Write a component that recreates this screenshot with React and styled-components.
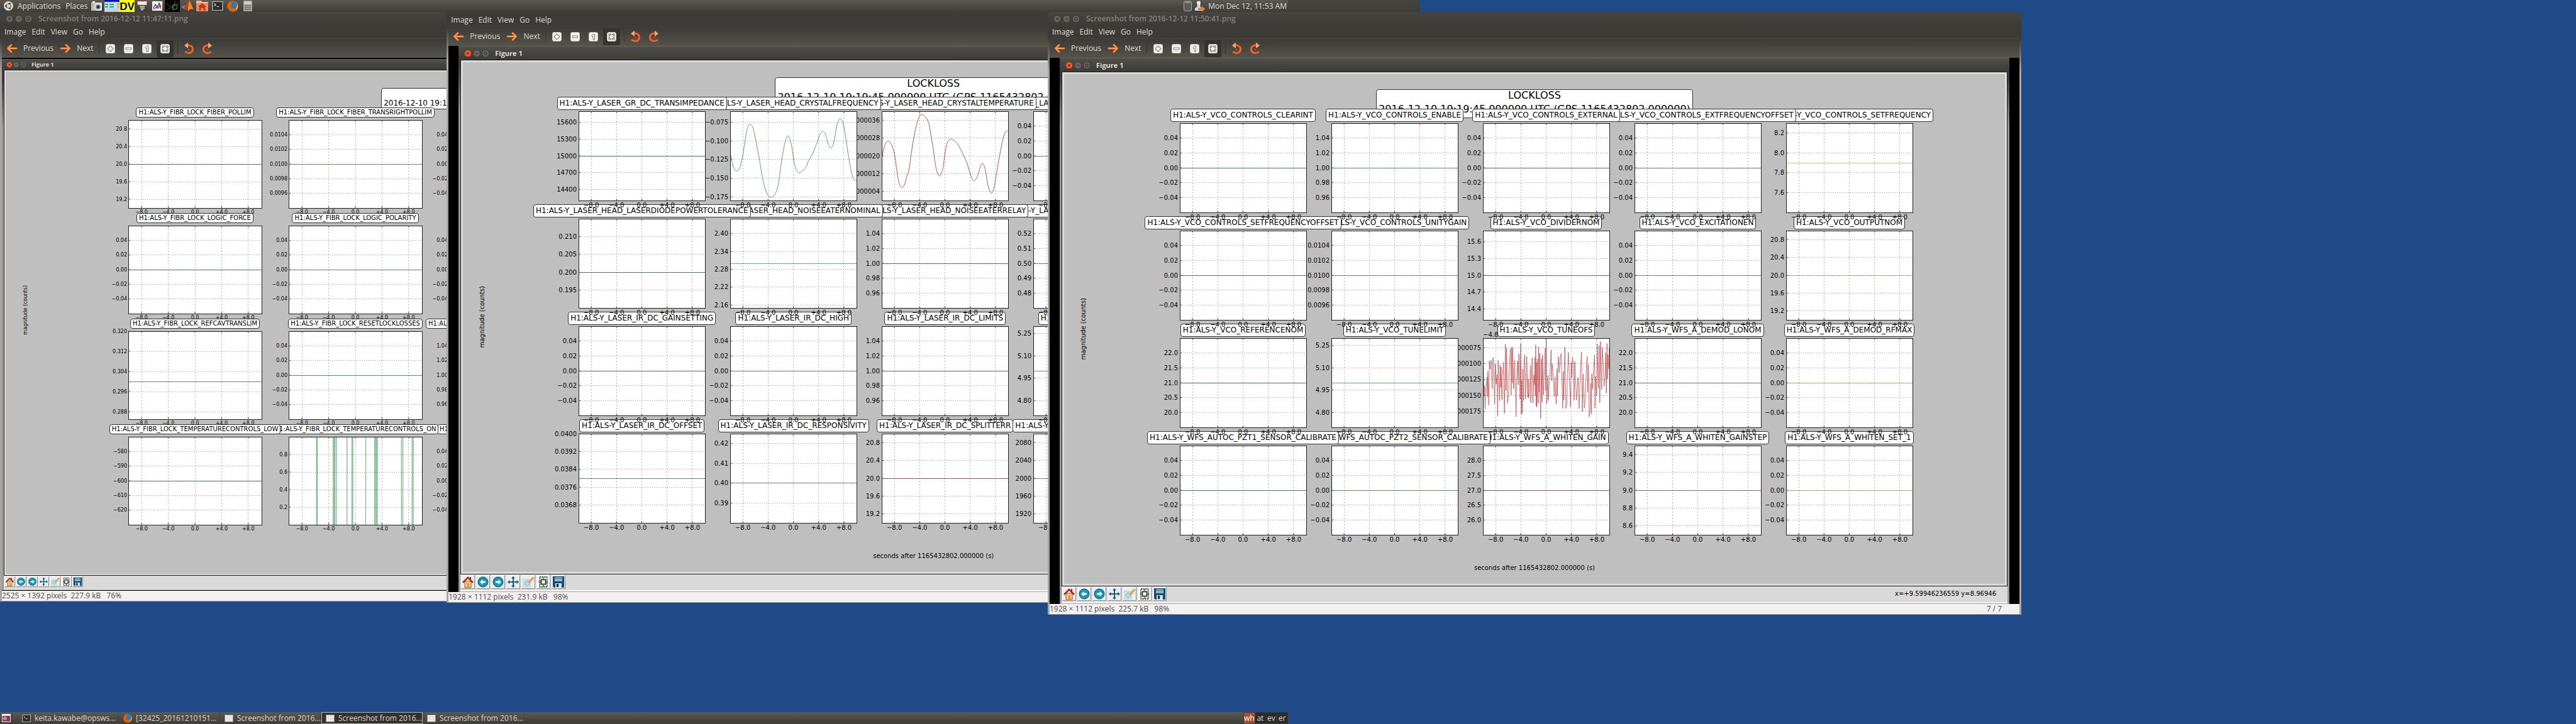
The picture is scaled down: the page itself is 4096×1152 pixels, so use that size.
import React from "react";
import styled, { createGlobalStyle } from "styled-components";

const UI = `"Open Sans", "Noto Sans", sans-serif`;
const PLOT = `"DejaVu Sans", sans-serif`;

const C = {
  blue: "#4c72b0",
  green: "#55a868",
  red: "#c44e52",
  purple: "#8172b2",
  tan: "#ccb974",
};

const Global = createGlobalStyle`
  * { box-sizing: border-box; }
  body { margin: 0; background: #204a87; font: 12px/16px ${UI}; }
  button { font: inherit; color: inherit; background: none; border: 0; margin: 0; padding: 0; cursor: pointer; }
`;

/* ------------------------------------------------------------ desktop */

const Desktop = styled.main`
  position: relative;
  min-height: 100vh;
  display: flex;
  flex-direction: column;
  justify-content: space-between;
  overflow: hidden;
  background: #204a87;
`;

const Panel = styled.header`
  position: relative;
  z-index: 5;
  width: 50%;
  height: 19px;
  display: flex;
  align-items: center;
  color: #dfdbd2;
  background: linear-gradient(#5b5850, #3e3d39);
`;

const Spacer = styled.div`
  flex: 1;
`;

const PanelMenu = styled.button`
  display: flex;
  align-items: center;
  gap: 7px;
  padding-left: ${(p) => p.$pad}px;
  line-height: 19px;
  white-space: nowrap;
`;

const Launchers = styled.nav`
  display: flex;
  margin-left: 3px;
`;

const Launcher = styled.button`
  width: 24px;
  height: 19px;
  display: flex;
  align-items: center;
  justify-content: center;
`;

const Tray = styled.div`
  display: flex;
  align-items: center;
  gap: 4px;
  padding-right: 2px;
  white-space: nowrap;
`;

const TaskIcon = styled.button`
  width: 20px;
  height: 19px;
  padding-left: 3px;
  display: flex;
  align-items: center;
  border-right: 1px solid #45443e;
  margin-right: 8px;
`;

const Task = styled.button`
  width: 161px;
  height: 19px;
  display: flex;
  align-items: center;
  gap: 6px;
  padding-left: 6px;
  white-space: nowrap;
  border: 1px solid ${(p) => (p.$active ? "#b4b1a9" : "transparent")};
  border-right-color: ${(p) => (p.$active ? "#b4b1a9" : "#45443e")};
  background: ${(p) => (p.$active ? "#33322f" : "none")};
`;

const Workspaces = styled.div`
  display: flex;
  height: 19px;
  width: 71px;
  border: 1px solid #3c3b37;
  background: #3c3b37;
  gap: 1px;
`;

const Workspace = styled.button`
  flex: 1;
  line-height: 17px;
  color: ${(p) => (p.$active ? "#fff" : "#dfdbd2")};
  background: ${(p) => (p.$active ? "#a5512d" : "#2b2b29")};
`;

/* ------------------------------------------------------------ viewer window */

const Window = styled.section`
  position: absolute;
  left: ${(p) => p.$left};
  top: ${(p) => p.$top}px;
  width: ${(p) => p.$width};
  z-index: ${(p) => p.$z};
  padding: 0 3px 1px;
  border-radius: 6px 6px 0 0;
  background: linear-gradient(#42413c 0, #3c3b37 42px, #a8a6a2 96px);
`;

const TitleBar = styled.div`
  height: 22px;
  display: flex;
  align-items: center;
  padding-left: 6px;
  color: #85827b;
  font-weight: 600;
  gap: 3px;
  white-space: nowrap;
`;

const TitleText = styled.span`
  padding-left: 7px;
`;

const Chrome = styled.div`
  margin: 0 -3px;
  padding: 0 3px;
  border-radius: 6px 6px 0 0;
  background: linear-gradient(#46453f, #3c3b37 22px);
`;

const MenuBar = styled.nav`
  height: 20px;
  display: flex;
  align-items: center;
  gap: 9px;
  padding-left: 4px;
  color: #dfdbd2;
`;

const ToolBar = styled.div`
  height: 31px;
  display: flex;
  align-items: center;
  color: #dfdbd2;
  background: linear-gradient(#3c3b37, #56534b);
  border-top: 1px solid #45443f;
`;

const NavButton = styled.button`
  display: flex;
  align-items: center;
  gap: 9px;
  margin-left: ${(p) => p.$gap}px;
`;

const Divider = styled.i`
  width: 1px;
  height: 18px;
  margin: 0 ${(p) => p.$right}px 0 ${(p) => p.$left}px;
  background: #35342f;
`;

const ToolButton = styled.button`
  width: 27px;
  height: 27px;
  margin-right: 2px;
  display: flex;
  align-items: center;
  justify-content: center;
  border-radius: 3px;
  background: ${(p) => (p.$pressed ? "#353430" : "none")};
`;

const ImageArea = styled.div`
  padding: ${(p) => (p.$small ? "2px 0 1px" : "0 16px")};
  background: #000;
`;

const Status = styled.footer`
  height: 16px;
  display: flex;
  justify-content: space-between;
  padding-right: 28px;
  line-height: 16px;
  color: #4c4c4c;
  background: #f2f1f0;
  white-space: pre;
`;

/* ------------------------------------------------------------ figure window */

const Figure = styled.div`
  background: linear-gradient(#3c3b37 0, #3c3b37 30px, #9a9894 110px);
  padding: 0 3px;
  border-bottom: 1px solid #a8a6a2;
`;

const FigureTitle = styled.div`
  height: ${(p) => (p.$small ? 17 : 22)}px;
  margin: 0 -3px;
  padding-left: ${(p) => (p.$small ? 7 : 9)}px;
  display: flex;
  align-items: center;
  gap: ${(p) => (p.$small ? 1 : 2)}px;
  color: #dfdbd2;
  font-weight: 700;
  font-size: ${(p) => (p.$small ? 9 : 11)}px;
  background: linear-gradient(#4f4e47, #3c3b37);
  border-top: 1px solid #65635b;
`;

const FigureName = styled.span`
  padding-left: 7px;
`;

const CanvasFrame = styled.div`
  display: flow-root;
  border: 1px solid #1c1c1c;
  background: #dcdcdc;
`;

const Canvas = styled.div`
  display: grid;
  grid-template-columns: ${(p) => p.$cols};
  margin: ${(p) => (p.$small ? 2 : 3)}px;
  padding: ${(p) => (p.$small ? "26px 0 78px" : "24px 0 19px")};
  background: #bfbfbf;
`;

const SupTitle = styled.div`
  grid-column: 1 / -1;
  justify-self: center;
  height: ${(p) => (p.$small ? 34 : 46)}px;
  margin-bottom: ${(p) => (p.$small ? -3 : -15)}px;
  padding: 0 3px ${(p) => (p.$small ? 1 : 2)}px;
  display: flex;
  flex-direction: column;
  justify-content: flex-end;
  text-align: center;
  font: ${(p) => (p.$small ? "12px/16px" : "16px/22px")} ${PLOT};
  color: #000;
  background: #fff;
  border: 1px solid #333;
  border-radius: 4px;
  white-space: nowrap;
`;

const YLabel = styled.div`
  align-self: center;
  padding-top: ${(p) => (p.$small ? 20 : 0)}px;
  margin: ${(p) => (p.$small ? "0 0 0 26px" : "23px 0 0 25px")};
  writing-mode: vertical-rl;
  rotate: 180deg;
  width: 12px;
  font: ${(p) => (p.$small ? 8 : 10)}px/12px ${PLOT};
  white-space: nowrap;
`;

const XLabel = styled.div`
  grid-column: 1 / -1;
  margin-top: 47px;
  text-align: center;
  font: 10px/12px ${PLOT};
`;

const Plots = styled.div`
  display: grid;
  grid-template-columns: repeat(5, minmax(0, 1fr));
  gap: ${(p) => (p.$small ? "8px 43px" : "6px 40px")};
`;

const Subplot = styled.div`
  position: relative;
  grid-column: ${(p) => p.$col};
  grid-row: ${(p) => p.$row};
  z-index: ${(p) => p.$z};
  display: flex;
  flex-direction: column;
  gap: ${(p) => (p.$small ? 4 : 2)}px;
`;

const PlotTitle = styled.div`
  align-self: center;
  position: relative;
  z-index: 1;
  flex: none;
  height: ${(p) => (p.$small ? 16 : 21)}px;
  min-width: ${(p) => p.$width || 0}px;
  padding: 0 3px;
  font: ${(p) => (p.$small ? "10px/13px" : "12px/18px")} ${PLOT};
  color: #000;
  background: #fff;
  border: 1px solid #333;
  border-radius: 4px;
  white-space: nowrap;
  visibility: ${(p) => (p.$empty ? "hidden" : "visible")};
`;

const Axes = styled.svg`
  display: block;
  width: 100%;
  height: ${(p) => (p.$small ? 140 : 142)}px;
  overflow: visible;
  font: ${(p) => (p.$small ? 8 : 10)}px ${PLOT};
`;

const FigureTools = styled.div`
  display: flex;
  justify-content: space-between;
  align-items: center;
  height: ${(p) => (p.$small ? 22 : 27)}px;
  padding: 0 18px 2px 1px;
  font: 10px/12px ${PLOT};
  background: #d9d9d9;
  border-bottom: ${(p) => (p.$small ? 1 : 2)}px solid #f4f4f2;
`;

const ToolGroup = styled.div`
  display: flex;
  gap: ${(p) => (p.$small ? 1 : 2)}px;
`;

const FigureTool = styled.button`
  width: ${(p) => (p.$small ? 17 : 22)}px;
  height: ${(p) => (p.$small ? 17 : 22)}px;
  background: #ececec;
  border: 1px solid;
  border-color: #f6f6f6 #8d8d8d #8d8d8d #f6f6f6;
  svg { display: block; width: 100%; height: 100%; }
`;

/* ------------------------------------------------------------ small icons */

const Knob = ({ kind, hot, size = 12 }) => (
  <svg width={size} height={size} viewBox="0 0 12 12" aria-hidden="true" style={{ display: "block" }}>
    <circle cx="6" cy="6" r="5.6" fill={hot ? "#ee5a2b" : "#66645d"} stroke="#33322e" strokeWidth=".6" />
    <g stroke={hot ? "#5a1d08" : "#33322e"} strokeWidth="1" fill="none">
      {kind === "close" && <path d="M4 4l4 4M8 4l-4 4" />}
      {kind === "min" && <path d="M3.6 6h4.8" />}
      {kind === "max" && <path d="M4 4h4v4h-4z" />}
    </g>
  </svg>
);

const Knobs = ({ hot, size }) => (
  <>
    <button aria-label="Close"><Knob kind="close" hot={hot} size={size} /></button>
    <button aria-label="Minimize"><Knob kind="min" size={size} /></button>
    <button aria-label="Maximize"><Knob kind="max" size={size} /></button>
  </>
);

const ArrowIcon = ({ flip }) => (
  <svg width="18" height="16" viewBox="0 0 18 16" aria-hidden="true">
    <g transform={flip ? "translate(18 0) scale(-1 1)" : undefined} fill="none" strokeLinecap="round" strokeLinejoin="round">
      <path d="M8 2.5L2.5 8L8 13.5M3 8H16" stroke="#c8531a" strokeWidth="3.4" />
      <path d="M8 2.5L2.5 8L8 13.5M3 8H16" stroke="#fb9a55" strokeWidth="2" />
    </g>
  </svg>
);

const PageIcon = ({ children }) => (
  <svg width="15" height="15" viewBox="0 0 15 15" aria-hidden="true">
    <rect x=".5" y=".5" width="14" height="14" rx="2.5" fill="#f0f0ee" stroke="#c9c7c2" />
    <g fill="#fff" stroke="#6b6963" strokeWidth=".9">{children}</g>
  </svg>
);

const RotateIcon = ({ flip }) => (
  <svg width="17" height="20" viewBox="0 0 17 20" aria-hidden="true">
    <g transform={flip ? "translate(17 0) scale(-1 1)" : undefined}>
      <path d="M6 5C12 4.5 15 8 14.5 12C14 17 8 19 3 15.8" fill="none" stroke="#f0602a" strokeWidth="3" strokeLinecap="round" />
      <path d="M1 5.5L7 .5V10z" fill="#fba468" />
      <circle cx="8" cy="12" r="1.2" fill="#d9501c" />
    </g>
  </svg>
);

const Thumb = () => (
  <svg width="14" height="12" viewBox="0 0 14 12" aria-hidden="true">
    <rect width="14" height="12" fill="#8e8c88" />
    <rect x="1" y="1" width="12" height="10" fill="#f0f0f0" />
    <path d="M1 4h12M1 7h12M4.5 1v10M8 1v10M11 1v10" stroke="#cfcfcf" strokeWidth=".7" />
  </svg>
);

const Firefox = ({ s }) => (
  <svg width={s} height={s} viewBox="0 0 18 18" aria-hidden="true">
    <circle cx="9" cy="9" r="8.6" fill="#e8761b" />
    <circle cx="9.4" cy="7.6" r="6.4" fill="#2a76c4" />
    <path d="M1 6C2 3 4 1.5 5 1C4.6 3 6 4 8.5 4.6C8 7 6 7 6 9.500C6 12 9 13.500 11.500 12.500C15 12 16.500 9 16.200 4C18.500 9 17.500 14 13.500 16.600C8 19 1 16 .5 10z" fill="#e66000" />
    <path d="M16 4C18 9 17 14 13 16C15.500 12 16.200 8 16 4z" fill="#ffcb3d" />
  </svg>
);

const Terminal = ({ w, h }) => (
  <svg width={w} height={h} viewBox="0 0 18 16" aria-hidden="true">
    <rect x=".5" y=".5" width="17" height="15" fill="#2c2c2c" stroke="#b5b5b5" strokeWidth="1.4" />
    <path d="M3.500 4l2.500 2-2.500 2M7.500 9h4" stroke="#eee" fill="none" strokeWidth="1.2" />
  </svg>
);

const LAUNCHERS = [
  ["Screenshot", <svg width="18" height="16" viewBox="0 0 18 16"><rect y="2" width="17" height="13" rx="1" fill="#dcdcd8" /><rect y="2" width="7" height="13" fill="#bdbcb6" /><path d="M2 0h4v3h-4z" fill="#eee" /><circle cx="11" cy="9" r="5" fill="#8e9096" stroke="#f6f6f6" strokeWidth="1.4" /><circle cx="11" cy="9" r="2.400" fill="#2b3444" /></svg>],
  ["Medm", <svg width="24" height="19" viewBox="0 0 24 19"><rect width="24" height="19" fill="#cfcfcf" /><rect width="24" height="3" fill="#0a12c0" /><rect x="0" y="4" width="20" height="9" fill="#a7eef0" /><path d="M1 7h5M8 7h7M1 11h5M8 11h7" stroke="#3c8fa0" strokeWidth="2" /><rect x="20" y="4" width="4" height="4" fill="#f0b23c" /><rect x="20" y="9" width="4" height="4" fill="#f0b23c" /></svg>],
  ["DV", <svg width="24" height="19" viewBox="0 0 24 19"><rect width="24" height="19" fill="#ff0" /><text x="12" y="16" textAnchor="middle" fontFamily="Liberation Sans" fontWeight="700" fontSize="17" fill="#000080">DV</text></svg>],
  ["Foton", <svg width="18" height="17" viewBox="0 0 18 17"><path d="M1 1h16l-1 6H2z" fill="#f3f1f1" stroke="#c33" strokeDasharray="2 1" strokeWidth="1" /><path d="M5 9.500h8M6 12h7M7 14.500h4" stroke="#ddd" strokeWidth="1.700" /></svg>],
  ["Diaggui", <svg width="16" height="15" viewBox="0 0 16 15"><rect width="16" height="15" fill="#f4f4f4" /><path d="M2 11l3-6 3 5 3-7 3 6" fill="none" stroke="#1d4f9a" strokeWidth="1.500" /><path d="M2 13l4-3 4 1 2-5 2 6" fill="none" stroke="#d22" strokeWidth="1.300" /></svg>],
  ["Scope", <svg width="24" height="19" viewBox="0 0 24 19"><rect width="24" height="19" fill="#000" /><circle cx="16" cy="11" r="4" fill="none" stroke="#9b9a1c" /><path d="M2 17L22 5M16 1v6M2 5l8 6M12 18l4-11" stroke="#3e7a18" strokeWidth=".9" fill="none" /></svg>],
  ["Matlab", <svg width="20" height="17" viewBox="0 0 20 17"><path d="M0 10l6-3 4 5-4 2z" fill="#4aa3a8" /><path d="M6 7c3-1 5-7 7-7l-2 12-3 3-4-3z" fill="#b5431a" /><path d="M13 0c2 2 4 9 7 14-3-1-5-2-9 3-1-4 1-10 2-17z" fill="#f08a1e" /></svg>],
  ["Home Folder", <svg width="20" height="17" viewBox="0 0 20 17"><path d="M0 0h8l1 2h10v15H0z" fill="#e9b9a0" /><rect y="4" width="19" height="13" fill="#e88b67" /><path d="M9.500 4l7 6h-2v6h-3v-4h-4v4h-3v-6h-2z" fill="#c63a13" /></svg>],
  ["Terminal", <Terminal w={18} h={15} />],
  ["Firefox", <Firefox s={18} />],
  ["Calculator", <svg width="14" height="17" viewBox="0 0 14 17"><rect width="14" height="17" rx="1" fill="#a6a5a0" /><rect x="1.500" y="1.500" width="11" height="4" fill="#cdd3cd" /><path d="M2 8h10M2 11h10M2 14h10" stroke="#6c6b67" strokeWidth="2" strokeDasharray="2 .9" /></svg>],
];

const TOOLS = [
  ["Home", <svg viewBox="0 0 20 20"><path d="M5 9h10v10H5z" fill="#f7cf7a" stroke="#8a5a2a" /><path d="M8.500 12h3.500v7H8.500z" fill="#e8962a" /><path d="M2 11L10 3l8 8" fill="none" stroke="#a5262a" strokeWidth="2.600" /><path d="M14 2v4" stroke="#a5262a" strokeWidth="2" /></svg>],
  ["Back", <svg viewBox="0 0 20 20"><circle cx="10" cy="10" r="8" fill="#1795b0" stroke="#0b5a74" /><path d="M9.500 5.500L5 10l4.500 4.500v-3H14v-3H9.500z" fill="#e6fbff" /></svg>],
  ["Forward", <svg viewBox="0 0 20 20"><circle cx="10" cy="10" r="8" fill="#1795b0" stroke="#0b5a74" /><path d="M10.500 5.500L15 10l-4.500 4.500v-3H6v-3h4.500z" fill="#e6fbff" /></svg>],
  ["Pan", <svg viewBox="0 0 20 20"><path d="M10 3v14M3 10h14" stroke="#15607f" strokeWidth="2" /><path d="M10 .8l3 3.700H7zM10 19.200l3-3.700H7zM.8 10l3.700-3v6zM19.200 10l-3.700-3v6z" fill="#15607f" /></svg>],
  ["Zoom", <svg viewBox="0 0 20 20"><path d="M2 6h11v12H2z" fill="#d5eff3" stroke="#a9c6cb" /><circle cx="8" cy="12" r="4" fill="#a6dde6" stroke="#7fb9c2" /><path d="M10 10L17 2l2 2-7 8z" fill="#f0a04b" stroke="#d98a3c" strokeWidth=".6" /></svg>],
  ["Subplots", <svg viewBox="0 0 20 20"><rect width="20" height="20" fill="#fff" /><rect x="4" y="2" width="12" height="16" fill="#dfe6ea" stroke="#222" strokeWidth="1.300" strokeDasharray="2.500 1" /><rect x="6.500" y="6.500" width="7" height="7" fill="#fff" stroke="#222" strokeWidth="1.600" /><path d="M10 2.500V5M10 15v2.500M2.500 10H5.500M14.500 10h3" stroke="#2a9a2a" strokeWidth="2.200" /></svg>],
  ["Save", <svg viewBox="0 0 20 20"><path d="M1 1h18v18H3l-2-2z" fill="#0e4f74" /><rect x="4" y="2" width="12" height="7" fill="#8fb5cb" /><path d="M4 4h12" stroke="#456" strokeWidth="1" /><rect x="5" y="12" width="10" height="7" fill="#cfdce2" /><rect x="7" y="13" width="3" height="5" fill="#123" /></svg>],
];

/* ------------------------------------------------------------ plots */

const X_TICKS = [["−8.0", 10], ["−4.0", 30], ["0.0", 50], ["+4.0", 70], ["+8.0", 90]];

const scales = {
  zero: { lo: -0.06, hi: 0.06, ticks: ["0.04", "0.02", "0.00", "−0.02", "−0.04"], value: 0 },
  one: { lo: 0.94, hi: 1.06, ticks: ["1.04", "1.02", "1.00", "0.98", "0.96"], value: 1 },
  twenty: { lo: 19, hi: 21, ticks: ["20.8", "20.4", "20.0", "19.6", "19.2"], value: 20 },
  cent: { lo: 0.0094, hi: 0.0106, ticks: ["0.0104", "0.0102", "0.0100", "0.0098", "0.0096"], value: 0.01 },
  five: { lo: 4.7, hi: 5.3, ticks: ["5.25", "5.10", "4.95", "4.80"], value: 5 },
  twentyOne: { lo: 19.5, hi: 22.5, ticks: ["22.0", "21.5", "21.0", "20.5", "20.0"], value: 21 },
};

const num = (s) => parseFloat(s.replace("−", "-"));

/* Catmull-Rom spline through a flat list of x, y pairs */
function spline(flat) {
  const p = [];
  for (let i = 0; i < flat.length; i += 2) p.push([flat[i], flat[i + 1]]);
  let d = `M${p[0]}`;
  for (let i = 0; i < p.length - 1; i++) {
    const a = p[i - 1] || p[i], b = p[i], c = p[i + 1], e = p[i + 2] || c;
    d += `C${b[0] + (c[0] - a[0]) / 6},${b[1] + (c[1] - a[1]) / 6} ${c[0] - (e[0] - b[0]) / 6},${c[1] - (e[1] - b[1]) / 6} ${c}`;
  }
  return d;
}

const FREQUENCY = {
  box: "735 540 322 437",
  d: spline([735,738,740,790,745,820,752,833,760,815,768,745,775,660,780,615,786,603,793,620,800,680,808,760,815,840,822,905,830,948,838,962,845,955,852,935,857,905,862,840,868,760,875,690,882,660,889,690,893,725,898,790,903,825,911,842,920,830,928,815,935,780,943,755,950,725,957,690,963,655,970,638,977,650,985,700,992,720,998,700,1003,650,1008,600,1015,576,1022,595,1028,650,1034,730,1040,800,1047,860,1054,881,1057,878]),
};

const TEMPERATURE = {
  box: "1122 540 323 437",
  d: spline([1122,775,1127,725,1133,695,1139,685,1146,700,1154,745,1160,820,1166,890,1173,914,1180,900,1186,860,1192,820,1198,740,1205,660,1212,600,1219,562,1225,557,1232,565,1238,580,1243,605,1248,660,1254,730,1260,810,1265,845,1270,857,1275,840,1279,815,1284,740,1290,692,1299,676,1307,685,1315,698,1323,725,1332,760,1340,795,1348,845,1353,870,1358,880,1364,868,1370,840,1375,805,1381,797,1387,830,1392,890,1398,930,1403,941,1409,915,1415,850,1421,780,1427,720,1434,660,1440,638,1445,640]),
};

const TUNEOFS = {
  box: "263 95 753 535",
  stroke: 0.8,
  d: "M" + [265,240,270,440,272,380,276,520,280,395,285,365,287,330,290,445,292,295,298,497,301,230,305,280,312,228,318,400,322,212,327,235,332,490,337,250,342,370,347,315,351,563,353,228,358,350,362,470,365,255,369,390,371,268,376,465,379,330,385,240,391,545,397,132,400,410,404,157,409,485,415,445,419,280,427,158,431,435,434,150,438,365,440,150,446,398,452,228,456,382,460,567,464,350,470,230,473,375,476,190,480,210,484,462,488,126,491,553,494,350,497,545,500,280,505,470,508,240,512,195,516,460,520,335,524,205,530,450,533,340,535,455,541,420,546,258,548,482,553,325,556,213,561,485,566,315,570,375,573,210,575,440,577,135,580,500,582,240,584,510,588,220,592,485,595,148,598,420,601,185,604,450,607,577,611,220,615,480,618,195,623,435,629,285,634,155,637,410,640,103,643,490,650,318,652,470,660,330,665,255,669,165,672,350,675,250,680,300,688,445,692,325,699,492,704,278,706,442,712,205,718,300,724,212,729,185,738,515,742,295,744,467,751,150,757,517,763,490,766,315,772,180,778,345,785,508,788,240,792,330,797,208,801,260,806,468,810,235,815,350,820,468,829,330,836,517,843,290,850,178,855,535,860,310,867,515,873,465,879,265,884,205,887,420,891,255,896,568,902,515,905,365,909,550,911,310,916,400,920,315,928,195,930,515,934,325,940,440,944,128,950,395,955,140,959,482,963,115,970,405,974,150,979,230,984,385,990,330,994,182,998,425,1002,128,1005,340,1008,195,1012,280,1014,150].join(" "),
};

const SWITCHES = {
  box: "0 0 463 443",
  stroke: 0.6,
  d: "M0 1" + [96, 99, 154, 157, 160, 165, 202, 219, 222, 267, 298, 301, 305, 307, 391, 396, 428, 432]
    .map((x) => `H${x}L${x + 0.6} 443L${x + 1.4} 1`).join("") + "H463",
};

const p = (title, color, scale, extra) => ({ title: title && `H1:ALS-Y_${title}`, color: C[color], ...(scales[scale] || scale), ...extra });
const cut = (title, color, scale, width) => ({ title, color: C[color], width, ...(scales[scale] || scale) });

const FIBR = [
  [p("FIBR_LOCK_FIBER_POLLIM", "blue", "twenty"), p("FIBR_LOCK_FIBER_TRANSRIGHTPOLLIM", "green", "cent"), cut("", "red", "zero")],
  [p("FIBR_LOCK_LOGIC_FORCE", "blue", "zero"), p("FIBR_LOCK_LOGIC_POLARITY", "green", "zero"), cut("", "red", "zero")],
  [
    p("FIBR_LOCK_REFCAVTRANSLIM", "blue", { lo: 0.285, hi: 0.32, ticks: ["0.320", "0.312", "0.304", "0.296", "0.288"], value: 0.3 }),
    p("FIBR_LOCK_RESETLOCKLOSSES", "green", "zero"),
    cut("H1:ALS-", "red", "one", 286),
  ],
  [
    p("FIBR_LOCK_TEMPERATURECONTROLS_LOW", "blue", { lo: -630, hi: -570, ticks: ["−580", "−590", "−600", "−610", "−620"], value: -600 }),
    p("FIBR_LOCK_TEMPERATURECONTROLS_ON", "green", { lo: 0, hi: 1, ticks: ["0.8", "0.6", "0.4", "0.2"], curve: SWITCHES }),
    cut("H1:", "red", "zero", 250),
  ],
];

const LASER = [
  [
    p("LASER_GR_DC_TRANSIMPEDANCE", "blue", { lo: 14200, hi: 15800, ticks: ["15600", "15300", "15000", "14700", "14400"], value: 15000 }),
    p("LASER_HEAD_CRYSTALFREQUENCY", "green", { lo: -0.18, hi: -0.06, ticks: ["−0.075", "−0.100", "−0.125", "−0.150", "−0.175"], curve: FREQUENCY }),
    p("LASER_HEAD_CRYSTALTEMPERATURE", "red", { lo: 0, hi: 0.00004, ticks: ["0.000036", "0.000028", "0.000020", "0.000012", "0.000004"], curve: TEMPERATURE }),
    cut("H1:ALS-Y_LA", "purple", "zero", 310),
  ],
  [
    p("LASER_HEAD_LASERDIODEPOWERTOLERANCE", "blue", { lo: 0.19, hi: 0.215, ticks: ["0.210", "0.205", "0.200", "0.195"], value: 0.2 }),
    p("LASER_HEAD_NOISEEATERNOMINAL", "green", { lo: 2.15, hi: 2.45, ticks: ["2.40", "2.34", "2.28", "2.22", "2.16"], value: 2.3 }),
    p("LASER_HEAD_NOISEEATERRELAY", "red", "one"),
    cut("H1:ALS-Y_LA", "purple", { lo: 0.47, hi: 0.53, ticks: ["0.52", "0.51", "0.50", "0.49", "0.48"], value: 0.5 }, 310),
  ],
  [
    p("LASER_IR_DC_GAINSETTING", "blue", "zero"),
    p("LASER_IR_DC_HIGH", "green", "zero"),
    p("LASER_IR_DC_LIMITS", "red", "one"),
    cut("H1:", "purple", "five", 186),
  ],
  [
    p("LASER_IR_DC_OFFSET", "blue", { lo: 0.036, hi: 0.04, ticks: ["0.0400", "0.0392", "0.0384", "0.0376", "0.0368"], value: 0.038 }),
    p("LASER_IR_DC_RESPONSIVITY", "green", { lo: 0.38, hi: 0.425, ticks: ["0.42", "0.41", "0.40", "0.39"], value: 0.4 }),
    p("LASER_IR_DC_SPLITTERR", "red", "twenty"),
    cut("H1:ALS-Y_", "purple", { lo: 1900, hi: 2100, ticks: ["2080", "2040", "2000", "1960", "1920"], value: 2000 }, 267),
  ],
];

const VCO = [
  [
    p("VCO_CONTROLS_CLEARINT", "blue", "zero"),
    p("VCO_CONTROLS_ENABLE", "green", "one"),
    p("VCO_CONTROLS_EXTERNAL", "red", "zero"),
    p("VCO_CONTROLS_EXTFREQUENCYOFFSET", "purple", "zero"),
    p("VCO_CONTROLS_SETFREQUENCY", "tan", { lo: 7.4, hi: 8.3, ticks: ["8.2", "8.0", "7.8", "7.6"], value: 7.895 }),
  ],
  [
    p("VCO_CONTROLS_SETFREQUENCYOFFSET", "blue", "zero"),
    p("VCO_CONTROLS_UNITYGAIN", "green", "cent"),
    p("VCO_DIVIDERNOM", "red", { lo: 14.2, hi: 15.8, ticks: ["15.6", "15.3", "15.0", "14.7", "14.4"], value: 15 }),
    p("VCO_EXCITATIONEN", "purple", "zero"),
    p("VCO_OUTPUTNOM", "tan", "twenty"),
  ],
  [
    p("VCO_REFERENCENOM", "blue", "twentyOne"),
    p("VCO_TUNELIMIT", "green", "five"),
    p("VCO_TUNEOFS", "red", { lo: -0.0002, hi: -0.00006, ticks: ["−0.000075", "−0.000100", "−0.000125", "−0.000150", "−0.000175"], curve: TUNEOFS, offset: "−4.8" }),
    p("WFS_A_DEMOD_LONOM", "purple", "twentyOne"),
    p("WFS_A_DEMOD_RFMAX", "tan", "zero"),
  ],
  [
    p("WFS_AUTOC_PZT1_SENSOR_CALIBRATE", "blue", "zero"),
    p("WFS_AUTOC_PZT2_SENSOR_CALIBRATE", "green", "zero"),
    p("WFS_A_WHITEN_GAIN", "red", { lo: 25.5, hi: 28.5, ticks: ["28.0", "27.5", "27.0", "26.5", "26.0"], value: 27 }),
    p("WFS_A_WHITEN_GAINSTEP", "purple", { lo: 8.5, hi: 9.5, ticks: ["9.4", "9.2", "9.0", "8.8", "8.6"], value: 9 }),
    p("WFS_A_WHITEN_SET_1", "tan", "zero"),
  ],
];

function Plot({ plot, small }) {
  const at = (v) => `${((plot.hi - v) / (plot.hi - plot.lo)) * 100}%`;
  return (
    <Axes $small={small} role="img" aria-label={plot.title || undefined}>
      <rect width="100%" height="100%" fill="#fff" />
      {plot.curve ? (
        <svg width="100%" height="100%" viewBox={plot.curve.box} preserveAspectRatio="none">
          <path d={plot.curve.d} fill="none" stroke={plot.color} strokeWidth={plot.curve.stroke || 1} vectorEffect="non-scaling-stroke" />
        </svg>
      ) : (
        <line x1="0" x2="100%" y1={at(plot.value)} y2={at(plot.value)} stroke={plot.color} strokeOpacity=".9" shapeRendering="crispEdges" />
      )}
      <g stroke="#000" strokeOpacity=".4" strokeDasharray="1 2" shapeRendering="crispEdges">
        {X_TICKS.map(([t, x]) => <line key={t} x1={`${x}%`} x2={`${x}%`} y1="0" y2="100%" strokeDasharray="2 3" strokeOpacity=".3" />)}
        {plot.ticks.map((t) => <line key={t} x1="0" x2="100%" y1={at(num(t))} y2={at(num(t))} />)}
      </g>
      <rect width="100%" height="100%" fill="none" stroke="#222" shapeRendering="crispEdges" />
      {X_TICKS.map(([t, x]) => (
        <g key={t}>
          <line x1={`${x}%`} x2={`${x}%`} y1="0" y2="3" stroke="#444" />
          <svg x={`${x}%`} y="100%" overflow="visible">
            <line y1="-3" y2="0" stroke="#444" />
            <text y={small ? 6 : 7} textAnchor="middle" dominantBaseline="central">{t}</text>
          </svg>
        </g>
      ))}
      {plot.ticks.map((t) => (
        <g key={t}>
          <line x1="0" x2="3" y1={at(num(t))} y2={at(num(t))} stroke="#444" />
          <text x={small ? -2 : -3} y={at(num(t))} textAnchor="end" dominantBaseline="central">{t}</text>
        </g>
      ))}
      {plot.offset && <text x="0" y="-6" dominantBaseline="central">{plot.offset}</text>}
    </Axes>
  );
}

function Viewer({ left, top, width, z, title, rows, small, columns, heading, xLabel, info, page, cursor }) {
  return (
    <Window $left={left} $top={top} $width={width} $z={z}>
      <Chrome>
        <TitleBar>
          {title && <><Knobs /><TitleText>{title}</TitleText></>}
        </TitleBar>
        <MenuBar>
          {["Image", "Edit", "View", "Go", "Help"].map((m) => <button key={m}>{m}</button>)}
        </MenuBar>
      </Chrome>
      <ToolBar>
        <NavButton $gap={7}><ArrowIcon />Previous</NavButton>
        <NavButton $gap={10}><ArrowIcon flip />Next</NavButton>
        <Divider $left={8} $right={4} />
        <ToolButton aria-label="Zoom in"><PageIcon><path d="M6 3.500h3V6h2.500v3H9v2.500H6V9H3.500V6H6z" /></PageIcon></ToolButton>
        <ToolButton aria-label="Zoom out"><PageIcon><path d="M3.500 6h8v3h-8z" /></PageIcon></ToolButton>
        <ToolButton aria-label="Normal size"><PageIcon><path d="M5 5.500l2-2h2.500v8.500H7V6.500H5z" /></PageIcon></ToolButton>
        <ToolButton aria-label="Best fit" $pressed>
          <PageIcon><path d="M3 6.500V3h3.500v1.500h-2v2zM12 6.500V3H8.500v1.500h2v2zM3 8.500V12h3.500v-1.500h-2v-2zM12 8.500V12H8.500v-1.500h2v-2z" /></PageIcon>
        </ToolButton>
        <Divider $left={4} $right={4} />
        <ToolButton aria-label="Rotate left"><RotateIcon /></ToolButton>
        <ToolButton aria-label="Rotate right"><RotateIcon flip /></ToolButton>
      </ToolBar>
      <ImageArea $small={small}>
        <Figure>
          <FigureTitle $small={small}>
            <Knobs hot size={small ? 10 : 12} />
            <FigureName>Figure 1</FigureName>
          </FigureTitle>
          <CanvasFrame>
            <Canvas $cols={columns} $small={small}>
              <SupTitle $small={small}>
                {heading && <div>{heading}</div>}
                <div>2016-12-10 19:19:45.000000 UTC (GPS 1165432802.000000)</div>
              </SupTitle>
              <YLabel $small={small}>magnitude (counts)</YLabel>
              <Plots $small={small}>
                {rows.map((row, r) =>
                  row.map((plot, c) => (
                    <Subplot key={`${r}-${c}`} $row={r + 1} $col={c + 1} $z={30 - r * 5 - c} $small={small}>
                      <PlotTitle $small={small} $width={plot.width} $empty={!plot.title}>{plot.title}</PlotTitle>
                      <Plot plot={plot} small={small} />
                    </Subplot>
                  ))
                )}
              </Plots>
              {xLabel && <XLabel>{xLabel}</XLabel>}
            </Canvas>
          </CanvasFrame>
          <FigureTools $small={small}>
            <ToolGroup $small={small}>
              {TOOLS.map(([name, icon]) => <FigureTool key={name} aria-label={name} $small={small}>{icon}</FigureTool>)}
            </ToolGroup>
            {cursor && <span>{cursor}</span>}
          </FigureTools>
        </Figure>
      </ImageArea>
      <Status>
        <span>{info}</span>
        {page && <span>{page}</span>}
      </Status>
    </Window>
  );
}

const TASKS = [
  ["keita.kawabe@opsws...", <Terminal w={14} h={12} />],
  ["[32425_20161210151...", <Firefox s={14} />],
  ["Screenshot from 2016...", <Thumb />],
  ["Screenshot from 2016...", <Thumb />, true],
  ["Screenshot from 2016...", <Thumb />],
];

export default function App() {
  const seconds = "seconds after 1165432802.000000 (s)";
  return (
    <Desktop>
      <Global />
      <Panel>
        <PanelMenu $pad={6}>
          <svg width="15" height="15" viewBox="0 0 16 16" aria-hidden="true">
            <circle cx="8" cy="8" r="8" fill="#dfdbd2" />
            <circle cx="8" cy="8" r="3.800" fill="none" stroke="#4a4843" strokeWidth="1.600" strokeDasharray="6.500 1.460" />
            <circle cx="3" cy="8" r="1.300" fill="#4a4843" />
            <circle cx="10.500" cy="3.600" r="1.300" fill="#4a4843" />
            <circle cx="10.500" cy="12.400" r="1.300" fill="#4a4843" />
          </svg>
          Applications
        </PanelMenu>
        <PanelMenu $pad={8}>Places</PanelMenu>
        <Launchers>
          {LAUNCHERS.map(([name, icon]) => <Launcher key={name} aria-label={name}>{icon}</Launcher>)}
        </Launchers>
        <Spacer />
        <Tray>
          <svg width="13" height="17" viewBox="0 0 13 17" aria-hidden="true">
            <rect x=".5" y="1" width="12" height="15.500" rx="2" fill="#5b5b59" stroke="#a4a4a0" />
            <ellipse cx="6.500" cy="2.500" rx="5.500" ry="1.600" fill="#8d8d8a" />
          </svg>
          <svg width="18" height="18" viewBox="0 0 18 18" aria-hidden="true">
            <circle cx="7" cy="3.500" r="3" fill="#ecebe6" />
            <path d="M4.500 6h5v4l3 2v4H1v-4l3.500-2z" fill="#d9d7d0" />
            <path d="M6 11.500h6V8.500l5.500 5-5.500 4.500v-3H6z" fill="#f07a2a" />
          </svg>
          <time>Mon Dec 12, 11:53 AM</time>
        </Tray>
      </Panel>

      <Viewer
        left="0" top={19} width="38.87%" z={1} small
        title="Screenshot from 2016-12-12 11:47:11.png"
        columns="195px 1fr 147px" rows={FIBR}
        info="2525 × 1392 pixels  227.9 kB   76%"
      />
      <Viewer
        left="17.34%" top={0} width="37.793%" z={2}
        columns="184px 1fr 147px" rows={LASER} heading="LOCKLOSS" xLabel={seconds}
        info="1928 × 1112 pixels  231.9 kB   98%"
      />
      <Viewer
        left="40.674%" top={19} width="37.793%" z={3}
        title="Screenshot from 2016-12-12 11:50:41.png"
        columns="184px 1fr 147px" rows={VCO} heading="LOCKLOSS" xLabel={seconds}
        info="1928 × 1112 pixels  225.7 kB   98%"
        page="7 / 7" cursor="x=+9.59946236559 y=8.96946"
      />

      <Panel as="footer">
        <TaskIcon aria-label="Show desktop">
          <svg width="14" height="13" viewBox="0 0 14 13" aria-hidden="true">
            <rect x=".5" y=".5" width="13" height="12" fill="#8a3452" stroke="#f1eef0" />
            <path d="M1 2h12" stroke="#fff" strokeWidth="2" />
            <circle cx="5" cy="7" r="3" fill="#c98aa0" />
          </svg>
        </TaskIcon>
        {TASKS.map(([label, icon, active], i) => (
          <Task key={i} $active={active}>{icon}{label}</Task>
        ))}
        <Spacer />
        <Workspaces>
          {["wh", "at", "ev", "er"].map((w, i) => <Workspace key={w} $active={i === 0}>{w}</Workspace>)}
        </Workspaces>
      </Panel>
    </Desktop>
  );
}
